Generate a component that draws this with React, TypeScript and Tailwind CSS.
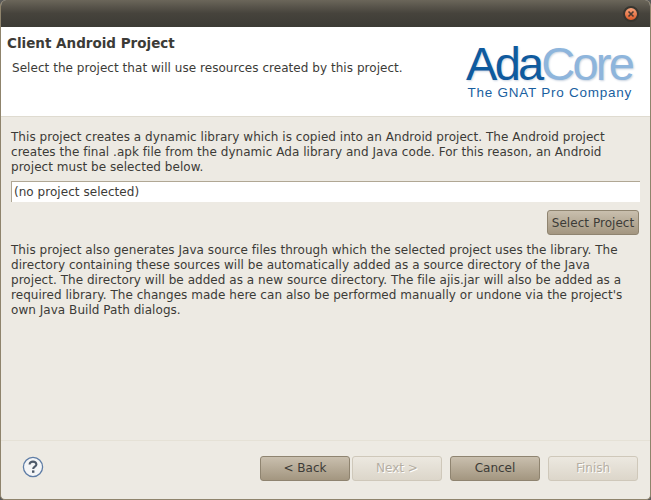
import React from "react";

function Btn({ label, w, disabled }: { label: string; w: string; disabled?: boolean }) {
  return (
    <div
      className={
        disabled
          ? `${w} h-[25px] flex items-center justify-center rounded-[3px] border border-[#cfc8ba] bg-gradient-to-b from-[#ece8e0] to-[#dcd6ca] text-[#b5aea2] [text-shadow:1px_1px_0_#ffffff]`
          : `${w} h-[25px] flex items-center justify-center rounded-[3px] border border-[#8f8470] bg-gradient-to-b from-[#c9bfae] to-[#a39680] text-[#3c3b37]`
      }
    >
      {label}
    </div>
  );
}

export default function App() {
  return (
    <div className="w-[651px] h-[500px] bg-[#5a5a58] overflow-hidden">
      <div
        className="w-[651px] h-[500px] flex flex-col rounded-t-[6px] rounded-b-[5px] overflow-hidden border-x border-b border-[#8f846c] bg-[#edeae3] text-[12px] leading-[15px] text-[#3c3b37]"
        style={{ fontFamily: '"DejaVu Sans", sans-serif' }}
      >
        <div className="h-[27px] shrink-0 -mx-px flex items-center justify-end pr-[12px] bg-gradient-to-b from-[#6b665a] via-[#46433c] to-[#3c3b35]">
          <div className="w-[16px] h-[16px] rounded-full bg-gradient-to-b from-[#f5a27a] to-[#dc5a26] border-2 border-[#37352f] flex items-center justify-center">
            <svg width="8" height="8" viewBox="0 0 8 8">
              <path d="M1.5 1.5L6.5 6.5M6.5 1.5L1.5 6.5" stroke="#4a3a32" strokeWidth="1.6" />
            </svg>
          </div>
        </div>

        <div className="h-[90px] shrink-0 bg-white border-b border-[#dfdbd0] flex justify-between">
          <div className="pl-[6px]">
            <div className="mt-[8px] font-bold text-[13.5px] leading-[16px] text-[#3c3b37]">Client Android Project</div>
            <div className="mt-[10px] ml-[5px] tracking-[0.042px]">Select the project that will use resources created by this project.</div>
          </div>
          <div className="pr-[18px] pt-[15px] flex flex-col items-end" style={{ fontFamily: '"Liberation Sans", sans-serif' }}>
            <div className="text-[47px] leading-[44px] tracking-[-2.8px] [text-shadow:1px_1px_2px_#c9d3e0]">
              <span className="text-[#0f5a9e]">Ada</span>
              <span className="text-[#8eb5dc]">Core</span>
            </div>
            <div className="text-[13.5px] leading-[14px] tracking-[0.75px] text-[#1a5f9f]">The GNAT Pro Company</div>
          </div>
        </div>

        <div className="flex-1 flex flex-col pl-[10px] pr-[10px] pt-[13px] tracking-[0.042px]">
          <p>
            This project creates a dynamic library which is copied into an Android project. The Android project<br />
            creates the final .apk file from the dynamic Ada library and Java code. For this reason, an Android<br />
            project must be selected below.
          </p>
          <div className="mt-[6px] h-[21px] bg-white border-t border-l border-[#b0a794] flex items-center pl-[2px]">
            (no project selected)
          </div>
          <div className="mt-[8px] flex justify-end pr-[1px]">
            <Btn label="Select Project" w="w-[92px] pt-[1px]" />
          </div>
          <p className="mt-[8px]">
            This project also generates Java source files through which the selected project uses the library. The<br />
            directory containing these sources will be automatically added as a source directory of the Java<br />
            project. The directory will be added as a new source directory. The file ajis.jar will also be added as a<br />
            required library. The changes made here can also be performed manually or undone via the project's<br />
            own Java Build Path dialogs.
          </p>
        </div>

        <div className="h-[59px] shrink-0 border-t border-[#e5e1d6] flex items-start pl-[21px] pr-[12px] pt-[15px]">
          <svg width="22" height="22" viewBox="0 0 22 22">
            <circle cx="11" cy="11" r="9.6" fill="#f4f5f6" stroke="#5f7da6" strokeWidth="1.3" />
            <path d="M7.6 8.6C7.6 6.6 9.1 5.6 11 5.6C12.9 5.6 14.4 6.7 14.4 8.4C14.4 10.6 11.2 10.6 11.2 13" fill="none" stroke="#4e5a6a" strokeWidth="2.1" />
            <rect x="10" y="14.4" width="2.4" height="2.4" fill="#4e5a6a" />
          </svg>
          <div className="ml-auto flex">
            <Btn label="< Back" w="w-[90px]" />
            <div className="ml-[2px]"><Btn label="Next >" w="w-[90px]" disabled /></div>
            <div className="ml-[8px]"><Btn label="Cancel" w="w-[90px]" /></div>
            <div className="ml-[8px]"><Btn label="Finish" w="w-[90px]" disabled /></div>
          </div>
        </div>
      </div>
    </div>
  );
}
